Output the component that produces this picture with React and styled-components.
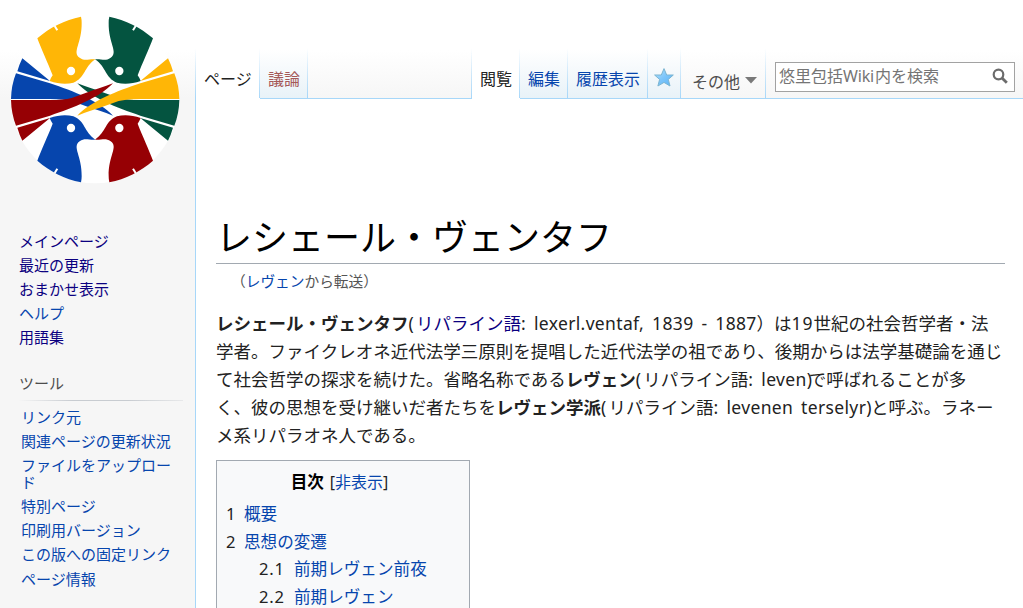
import React from "react";
import styled, { createGlobalStyle } from "styled-components";

const Global = createGlobalStyle`
  * { box-sizing: border-box; }
  body { margin: 0; background: #f6f6f6; overflow: hidden; }
  body, input { font-family: "Noto Sans", "Noto Sans CJK JP", sans-serif; }
  a { color: #0645ad; text-decoration: none; }
`;

const fade = "linear-gradient(to bottom, #fff 0%, #fff 50px, #f6f6f6 98px)";
const separator = "linear-gradient(to bottom, rgba(167,215,249,0) 48px, #a7d7f9 98px)";

const Page = styled.div`
  display: grid;
  grid-template-columns: 195px 1fr;
  height: 608px;
  background: ${fade};
  overflow: hidden;
`;
const Sidebar = styled.aside`
  padding-left: 9px;
`;
const LogoLink = styled.a`
  display: block;
  height: 229px;
  margin-left: -9px;
  svg { display: block; }
`;
const Menu = styled.ul`
  list-style: none;
  margin: 0;
  padding: 0 10px 0 ${(p) => p.$indent}px;
`;
const MenuItem = styled.li`
  font-size: 15px;
  line-height: 17px;
  padding: 3.6px 0;
  a { color: ${(p) => (p.$visited ? "#0b0080" : "#0645ad")}; }
`;
const MenuTitle = styled.h3`
  margin: 20px 12px 4px 10px;
  padding: 5px 0 8px;
  font-weight: 400;
  font-size: 15px;
  line-height: 17px;
  color: #4d4d4d;
  border-bottom: 1px solid;
  border-image: linear-gradient(to right, rgba(200,204,209,0), #c8ccd1 33%, #c8ccd1 66%, rgba(200,204,209,0.3)) 1;
`;
const Main = styled.main`
  display: flex;
  flex-direction: column;
  min-width: 0;
  background: ${separator} left top / 1px 100% no-repeat;
  padding-left: 1px;
`;
const Tabs = styled.nav`
  display: flex;
  height: 99px;
  flex: none;
`;
const Tab = styled.div`
  width: ${(p) => p.$w}px;
  flex: none;
  border-bottom: 1px solid ${(p) => (p.$active ? "#fff" : "#a7d7f9")};
  background: ${separator} right top / 1px 98px no-repeat,
    ${(p) =>
      p.$active ? "#fff" : p.$plain ? "transparent" : "linear-gradient(to bottom, #fff 50px, #e8f2f8 98px)"};
  padding: ${(p) => p.$top || 68}px 0 0 8px;
  font-size: 16px;
  line-height: 22px;
  white-space: nowrap;
  color: ${(p) => p.$color || "#0645ad"};
`;
const StarTab = styled(Tab)`
  padding-left: 5px;
  svg { display: block; }
`;
const MoreTab = styled(Tab)`
  display: flex;
  gap: 4px;
  padding-left: 11px;
  svg { margin-top: 5px; }
`;
const SearchArea = styled.div`
  flex: 1;
  border-bottom: 1px solid #a7d7f9;
  padding: 62px 8px 0 9px;
`;
const SearchBox = styled.div`
  display: flex;
  align-items: center;
  justify-content: space-between;
  height: 30px;
  background: #fff;
  border: 1px solid #a2a2a2;
  padding: 0 6px 2px 3px;
  font-size: 16px;
  line-height: 22px;
  color: #757575;
  white-space: nowrap;
`;
const Wiki = styled.span`
  display: inline-block;
  width: 32px;
  letter-spacing: -0.15px;
`;
const Article = styled.article`
  flex: 1;
  background: #fff;
  padding: 111px 18px 0 20px;
  color: #222;
`;
const Title = styled.h1`
  margin: 0;
  height: 54px;
  font-weight: 400;
  font-size: 36px;
  line-height: 56px;
  color: #000;
  border-bottom: 1px solid #a2a9b1;
`;
const Redirect = styled.div`
  margin: 6px 0 0 15px;
  font-size: 14.7px;
  line-height: 22px;
  color: #545454;
`;
const Lead = styled.p`
  margin: 17px -10px 11px 0;
  font-size: 17.5px;
  line-height: 28px;
  white-space: nowrap;
`;
const Line = styled.span`
  display: block;
  height: 28px;
`;
const Latin = styled.span`
  display: inline-block;
  width: ${(p) => p.$w}px;
  letter-spacing: ${(p) => p.$ls ?? 0.35}px;
  word-spacing: 3px;
  white-space: pre;
`;
const Visited = styled.a`
  && { color: #0b0080; }
`;
const Toc = styled.div`
  width: 254px;
  height: 220px;
  border: 1px solid #a2a9b1;
  background: #f8f9fa;
  padding: 7px 9px;
  font-size: 16.6px;
  line-height: 27.7px;
`;
const TocTitle = styled.div`
  display: flex;
  justify-content: center;
  gap: 6px;
  height: 32px;
  line-height: 28px;
  padding-right: 7px;
  font-size: 16px;
  strong { color: #000; font-size: 16.6px; }
`;
const TocRow = styled.div`
  display: flex;
  gap: 8px;
  padding-left: ${(p) => (p.$sub ? 33 : 0)}px;
  span {
    width: ${(p) => (p.$sub ? 27 : 10)}px;
    letter-spacing: ${(p) => (p.$sub ? 0.8 : 0)}px;
    white-space: nowrap;
  }
`;

const HEAD =
  "M243 50C194 60 150 82 112 115C123 145 144 190 158 226C154 232 151 237 149 243C175 252 200 253 220 248C256 234 251 202 286 178C263 177 254 184 239 173C215 156 246 130 245 68Q245 58 243 50Z";
const WING =
  "M67 175L150 243L52 214Q58 193 67 175ZM48 220L150 250C220 273 300 305 339 347C312 336 285 328 265 321L215 303Q190 297 150 297H33Q34 255 48 220Z";
const MIRROR_X = "translate(571 0) scale(-1 1)";
const MIRROR_Y = "translate(0 597) scale(1 -1)";
const MIRROR_XY = "translate(571 597) scale(-1 -1)";

const Bird = ({ color, transform }) => (
  <g transform={transform}>
    <path d={HEAD} fill={color} />
    <circle cx="213" cy="213" r="12.5" fill="#fff" />
    <path d="M164 78L172 91" stroke="#fff" strokeWidth="6" />
  </g>
);

const Logo = () => (
  <svg width="196" height="200" viewBox="0 0 588 600">
    <circle cx="285" cy="298" r="252" fill="#fff" />
    <path d={WING} fill="#0645ad" />
    <path d={WING} fill="#045440" transform={MIRROR_XY} />
    <path d={WING} fill="#960004" transform={MIRROR_Y} />
    <path d={WING} fill="#ffb606" transform={MIRROR_X} />
    <Bird color="#ffb606" />
    <Bird color="#045440" transform={MIRROR_X} />
    <Bird color="#0645ad" transform={MIRROR_Y} />
    <Bird color="#960004" transform={MIRROR_XY} />
  </svg>
);

const Star = () => (
  <svg width="22" height="22" viewBox="0 0 22 22">
    <defs>
      <linearGradient id="star" x1="0" y1="0" x2="1" y2="1">
        <stop offset="0" stopColor="#b8e3fd" />
        <stop offset="0.5" stopColor="#7cc5fa" />
        <stop offset="1" stopColor="#5ab2f6" />
      </linearGradient>
    </defs>
    <path
      d="M11 1.6L13.7 8H20.3L15.3 12.4L17 19L11 15.4L4.9 19L6.6 12.4L1.6 8H8.3Z"
      fill="url(#star)"
      stroke="#7cb5d1"
      strokeWidth="1"
      strokeLinejoin="round"
    />
  </svg>
);

const mainLinks = [
  ["メインページ", true],
  ["最近の更新", true],
  ["おまかせ表示", true],
  ["ヘルプ", false],
  ["用語集", true],
];
const tools = [
  "リンク元",
  "関連ページの更新状況",
  "ファイルをアップロード",
  "特別ページ",
  "印刷用バージョン",
  "この版への固定リンク",
  "ページ情報",
];
const contents = [
  ["1", "概要"],
  ["2", "思想の変遷"],
  ["2.1", "前期レヴェン前夜", true],
  ["2.2", "前期レヴェン", true],
];

export default function App() {
  return (
    <>
      <Global />
      <Page>
        <Sidebar>
          <LogoLink href="#"><Logo /></LogoLink>
          <Menu $indent={10}>
            {mainLinks.map(([label, visited]) => (
              <MenuItem key={label} $visited={visited}><a href="#">{label}</a></MenuItem>
            ))}
          </Menu>
          <MenuTitle>ツール</MenuTitle>
          <Menu $indent={12}>
            {tools.map((label) => (
              <MenuItem key={label}><a href="#">{label}</a></MenuItem>
            ))}
          </Menu>
        </Sidebar>
        <Main>
          <Tabs>
            <Tab $w={64} $active $color="#222">ページ</Tab>
            <Tab $w={48} $color="#a55858">議論</Tab>
            <Tab $w={164} $plain />
            <Tab $w={48} $active $color="#222">閲覧</Tab>
            <Tab $w={48}>編集</Tab>
            <Tab $w={80}>履歴表示</Tab>
            <StarTab $w={33} $top={67}><Star /></StarTab>
            <MoreTab $w={85} $plain $top={71} $color="#4d4d4d">
              その他
              <svg width="14" height="10" viewBox="0 0 14 10"><path d="M1 1H13L7 7.5Z" fill="#797979" /></svg>
            </MoreTab>
            <SearchArea>
              <SearchBox>
                <span>悠里包括<Wiki>Wiki</Wiki>内を検索</span>
                <svg width="16" height="16" viewBox="0 0 16 16" fill="none" stroke="#6b6b6b">
                  <circle cx="6.5" cy="6.5" r="4.8" strokeWidth="2.2" />
                  <path d="M10 10L14.8 14.8" strokeWidth="2.8" />
                </svg>
              </SearchBox>
            </SearchArea>
          </Tabs>
          <Article>
            <Title>レシェール・ヴェンタフ</Title>
            <Redirect>（<a href="#">レヴェン</a>から転送）</Redirect>
            <Lead>
              <Line>
                <b>レシェール・ヴェンタフ</b><Latin $w={7.5}>(</Latin><Visited href="#">リパライン語</Visited>
                <Latin $w={235.5}>: lexerl.ventaf, 1839 - 1887</Latin>）は<Latin $w={22} $ls={0.9}>19</Latin>世紀の社会哲学者・法
              </Line>
              <Line>学者。ファイクレオネ近代法学三原則を提唱した近代法学の祖であり、後期からは法学基礎論を通じ</Line>
              <Line>
                て社会哲学の探求を続けた。省略名称である<b>レヴェン</b><Latin $w={7.5}>(</Latin>リパライン語
                <Latin $w={60.5}>: leven)</Latin>で呼ばれることが多
              </Line>
              <Line>
                く、彼の思想を受け継いだ者たちを<b>レヴェン学派</b><Latin $w={7.5}>(</Latin>リパライン語
                <Latin $w={157.5}>: levenen terselyr)</Latin>と呼ぶ。ラネー
              </Line>
              <Line>メ系リパラオネ人である。</Line>
            </Lead>
            <Toc>
              <TocTitle>
                <strong>目次</strong>
                <span>[<a href="#">非表示</a>]</span>
              </TocTitle>
              {contents.map(([number, label, sub]) => (
                <TocRow key={number} $sub={sub}>
                  <span>{number}</span>
                  <a href="#">{label}</a>
                </TocRow>
              ))}
            </Toc>
          </Article>
        </Main>
      </Page>
    </>
  );
}
